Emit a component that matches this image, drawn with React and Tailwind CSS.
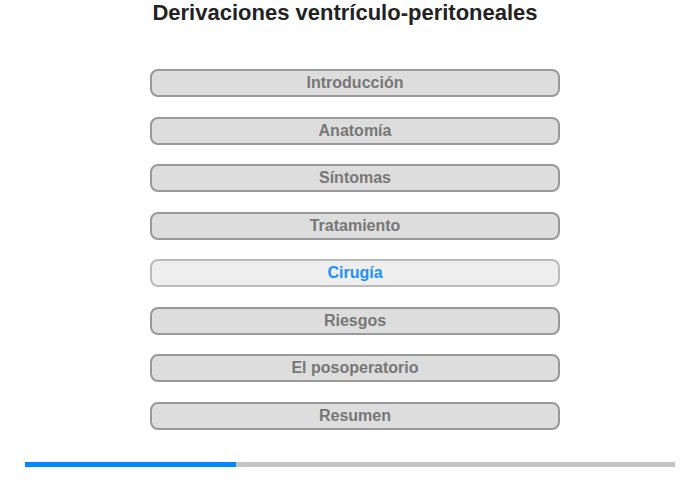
import React from 'react'

const sections = [
    'Introducción',
    'Anatomía',
    'Síntomas',
    'Tratamiento',
    'Cirugía',
    'Riesgos',
    'El posoperatorio',
    'Resumen',
]

const active = 'Cirugía'

export default function App() {
    return (
        <div className="w-[700px] h-[480px] bg-white pt-px font-['Liberation_Sans',Arial,sans-serif]">
            <h1 className="w-[690px] text-center text-[22px] leading-[24px] font-bold text-[#222]">
                Derivaciones ventrículo-peritoneales
            </h1>
            <div className="ml-[150px] mt-[44px] flex w-[410px] flex-col gap-[19.5px]">
                {sections.map((s) =>
                    s === active ? (
                        <button
                            key={s}
                            className="h-[28px] rounded-[8px] border-2 border-[#bbbbbb] bg-[#eeeeee] text-[16px] leading-[24px] font-bold text-[#1e90ff]"
                        >
                            {s}
                        </button>
                    ) : (
                        <button
                            key={s}
                            className="h-[28px] rounded-[8px] border-2 border-[#999999] bg-[#dddddd] text-[16px] leading-[24px] font-bold text-[#777777]"
                        >
                            {s}
                        </button>
                    )
                )}
            </div>
            <div className="mx-[25px] mt-[32.5px] flex h-[5px] bg-[#c4c4c4]">
                <div className="w-[211px] bg-[#0088ff]"></div>
            </div>
        </div>
    )
}
